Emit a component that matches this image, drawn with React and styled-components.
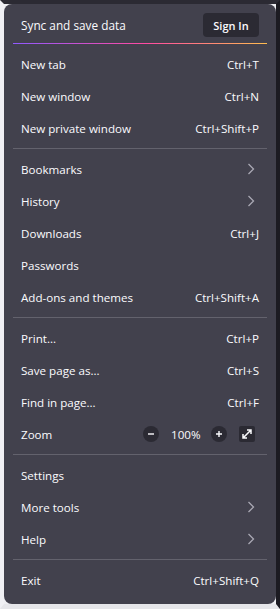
import React from "react";
import styled, { createGlobalStyle } from "styled-components";

const Global = createGlobalStyle`
  html, body { margin: 0; padding: 0; }
  body {
    width: 280px;
    height: 609px;
    overflow: hidden;
    font-family: "Open Sans", "Noto Sans", "Liberation Sans", sans-serif;
    -webkit-font-smoothing: antialiased;
  }
`;

const Backdrop = styled.div`
  box-sizing: border-box;
  width: 280px;
  height: 609px;
  background: #eeeef2;
  border-top: 4px solid #2b2a33;
  border-right: 4px solid #1c1b22;
  border-bottom: 5px solid #e6e6ea;
  border-left: 4px solid #f0f0f4;
  display: flex;
`;

const Panel = styled.div`
  box-sizing: border-box;
  flex: 1;
  background: #42414d;
  border-radius: 8px;
  padding: 4px 9px 8px;
  display: flex;
  flex-direction: column;
  color: #fbfbfe;
  font-size: 11.6px;
  & > * { flex: none; }
`;

const Header = styled.div`
  display: flex;
  align-items: center;
  justify-content: space-between;
  height: 34px;
  padding: 0 8px;
  margin-bottom: 1px;
`;

const HeaderTitle = styled.span`
  font-size: 11.8px;
`;

const SignIn = styled.button`
  box-sizing: border-box;
  width: 56px;
  height: 24px;
  border: none;
  border-radius: 4px;
  background: #2b2a33;
  color: #fbfbfe;
  font-family: inherit;
  font-size: 11px;
  font-weight: 600;
  padding: 0;
`;

const Gradient = styled.div`
  height: 1px;
  margin-bottom: 4px;
  background: linear-gradient(90deg, #9059ff 0%, #ff4aa2 52%, #ffbd4f 100%);
`;

const Separator = styled.div`
  height: 1px;
  margin: 4px 0;
  background: #63626d;
`;

const Row = styled.div`
  display: flex;
  align-items: center;
  justify-content: space-between;
  height: 32px;
  padding: 0 8px;
`;

const Label = styled.span`
  white-space: nowrap;
`;

const Shortcut = styled.span`
  white-space: nowrap;
  color: #fbfbfe;
`;

const Chevron = styled.svg`
  width: 8px;
  height: 12px;
  margin-right: 4px;
`;

const ZoomControls = styled.div`
  display: flex;
  align-items: center;
  gap: 12px;
  margin-right: 4px;
`;

const RoundBtn = styled.span`
  display: flex;
  align-items: center;
  justify-content: center;
  width: 16px;
  height: 16px;
  border-radius: 50%;
  background: #2b2a33;
`;

const SquareBtn = styled.span`
  display: flex;
  align-items: center;
  justify-content: center;
  width: 16px;
  height: 16px;
  border-radius: 2px;
  background: #2b2a33;
`;

const ZoomValue = styled.span`
  width: 28px;
  text-align: center;
`;

const ChevronIcon = () => (
  <Chevron viewBox="0 0 8 12">
    <path d="M1.5 1 L6.5 6 L1.5 11" fill="none" stroke="#a9a8b3" strokeWidth="1.3" />
  </Chevron>
);

const Item = ({ label, shortcut, sub }) => (
  <Row>
    <Label>{label}</Label>
    {shortcut && <Shortcut>{shortcut}</Shortcut>}
    {sub && <ChevronIcon />}
  </Row>
);

export default function App() {
  return (
    <>
      <Global />
      <Backdrop>
        <Panel>
          <Header>
            <HeaderTitle>Sync and save data</HeaderTitle>
            <SignIn>Sign In</SignIn>
          </Header>
          <Gradient />
          <Item label="New tab" shortcut="Ctrl+T" />
          <Item label="New window" shortcut="Ctrl+N" />
          <Item label="New private window" shortcut="Ctrl+Shift+P" />
          <Separator />
          <Item label="Bookmarks" sub />
          <Item label="History" sub />
          <Item label="Downloads" shortcut="Ctrl+J" />
          <Item label="Passwords" />
          <Item label="Add-ons and themes" shortcut="Ctrl+Shift+A" />
          <Separator />
          <Item label="Print..." shortcut="Ctrl+P" />
          <Item label="Save page as..." shortcut="Ctrl+S" />
          <Item label="Find in page..." shortcut="Ctrl+F" />
          <Row>
            <Label>Zoom</Label>
            <ZoomControls>
              <RoundBtn>
                <svg width="10" height="10" viewBox="0 0 10 10">
                  <path d="M2 5 H8" stroke="#fbfbfe" strokeWidth="1.4" />
                </svg>
              </RoundBtn>
              <ZoomValue>100%</ZoomValue>
              <RoundBtn>
                <svg width="10" height="10" viewBox="0 0 10 10">
                  <path d="M2 5 H8 M5 2 V8" stroke="#fbfbfe" strokeWidth="1.4" />
                </svg>
              </RoundBtn>
              <SquareBtn>
                <svg width="12" height="12" viewBox="0 0 12 12">
                  <path
                    d="M2.5 9.5 L9.5 2.5 M6 2 H10 V6 M2 6 V10 H6"
                    fill="none"
                    stroke="#fbfbfe"
                    strokeWidth="1.5"
                  />
                </svg>
              </SquareBtn>
            </ZoomControls>
          </Row>
          <Separator />
          <Item label="Settings" />
          <Item label="More tools" sub />
          <Item label="Help" sub />
          <Separator />
          <Item label="Exit" shortcut="Ctrl+Shift+Q" />
        </Panel>
      </Backdrop>
    </>
  );
}
